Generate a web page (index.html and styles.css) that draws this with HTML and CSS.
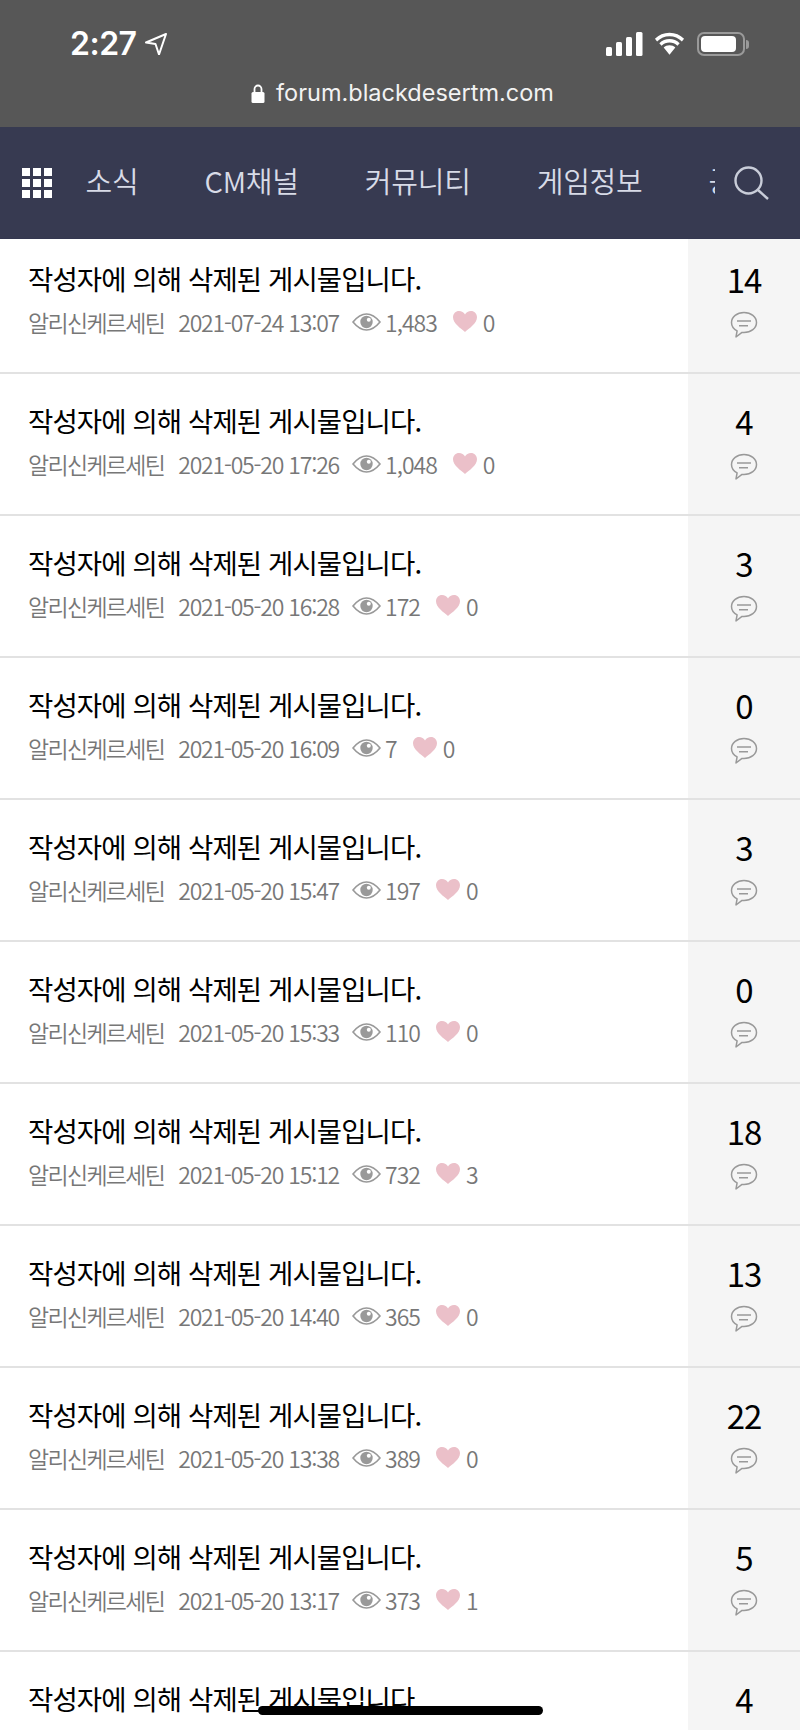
FILE: index.html
```html
<!DOCTYPE html>
<html lang="ko">
<head>
<meta charset="utf-8">
<title>forum.blackdesertm.com</title>
<link rel="stylesheet" href="styles.css">
</head>
<body>
<div class="phone">
  <header class="status">
    <div class="status-top">
      <div class="clock"><span>2:27</span>
        <svg class="loc" viewBox="0 0 22 22"><path d="M1 9.500 21 1 14 21.500 10.500 11Z" fill="none" stroke="#fff" stroke-width="2" stroke-linejoin="round"/></svg>
      </div>
      <div class="sys">
        <svg class="sig" viewBox="0 0 37 24"><rect x="0" y="15" width="6" height="9" rx="1.500"/><rect x="10" y="10" width="6" height="14" rx="1.500"/><rect x="20" y="5" width="6" height="19" rx="1.500"/><rect x="30" y="0" width="6.500" height="24" rx="1.500"/></svg>
        <svg class="wifi" viewBox="0 0 32 24"><path d="M16 4c5 0 9 1.800 12.800 5.300l2.200-2.700C27 2.700 22 0.500 16 0.500S5 2.700 1 6.600l2.200 2.700C7 5.800 11 4 16 4Z"/><path d="M16 10.500c3.200 0 5.800 1.100 8.200 3.300l2.300-2.700C23.500 8.400 20 6.900 16 6.900S8.500 8.400 5.500 11.100l2.300 2.700c2.400-2.200 5-3.300 8.200-3.300Z"/><path d="M16 13.300c-2.400 0-4.300.8-6 2.300l6 7.400 6-7.400c-1.700-1.500-3.600-2.300-6-2.300Z"/></svg>
        <div class="batt"><div class="batt-fill"></div></div><div class="batt-tip"></div>
      </div>
    </div>
    <div class="url">
      <svg class="lock" viewBox="0 0 14 19"><path d="M3.500 9V5a3.500 3.500 0 0 1 7 0v4" fill="none" stroke="#fff" stroke-width="1.800"/><rect x="0.500" y="8" width="13" height="11" rx="1.500" fill="#fff"/></svg>
      <span>forum.blackdesertm.com</span>
    </div>
  </header>

  <nav class="nav">
    <div class="grid-ico"><i></i><i></i><i></i><i></i><i></i><i></i><i></i><i></i><i></i></div>
    <div class="nav-items">
      <span class="n1">소식</span><span class="n2">CM채널</span><span class="n3">커뮤니티</span><span class="n4">게임정보</span><span class="n5">공략</span>
    </div>
    <svg class="search" viewBox="0 0 36 36"><circle cx="15.500" cy="15.500" r="13" fill="none" stroke="#c9cdd9" stroke-width="2.400"/><path d="M25 25 35 34" stroke="#c9cdd9" stroke-width="2.400" fill="none"/></svg>
  </nav>

  <main class="list" id="list"></main>
  <div class="home-bar"></div>
</div>
<script src="list.js"></script>
</body>
</html>
```

FILE: list.js
```js
var rows = [
  ["2021-07-24 13:07", "1,483", "0", "14"],
  ["2021-05-20 17:26", "1,048", "0", "4"],
  ["2021-05-20 16:28", "172", "0", "3"],
  ["2021-05-20 16:09", "7", "0", "0"],
  ["2021-05-20 15:47", "197", "0", "3"],
  ["2021-05-20 15:33", "110", "0", "0"],
  ["2021-05-20 15:12", "732", "3", "18"],
  ["2021-05-20 14:40", "365", "0", "13"],
  ["2021-05-20 13:38", "389", "0", "22"],
  ["2021-05-20 13:17", "373", "1", "5"],
  ["", "", "", "4"]
];
var eye = '<svg class="eye" viewBox="0 0 29 18"><path d="M1 9C5.500 3.500 9.500 1 14.500 1S23.500 3.500 28 9C23.500 14.500 19.500 17 14.500 17S5.500 14.500 1 9Z" fill="none" stroke="#999" stroke-width="1.600"/><circle cx="14.500" cy="9" r="6.200" fill="#999"/><circle cx="16.800" cy="6.800" r="2" fill="#fff"/></svg>';
var heart = '<svg class="heart" viewBox="0 0 24 21"><path d="M12 21C8 17.300 0 12.500 0 6.200 0 2.600 2.700 0 6 0 8.600 0 10.900 1.400 12 3.500 13.100 1.400 15.400 0 18 0 21.300 0 24 2.600 24 6.200 24 12.500 16 17.300 12 21Z" fill="#ebc0c9"/></svg>';
var bubble = '<svg class="bubble" viewBox="0 0 28 28"><path d="M14 1.500C7 1.500 1.500 5.800 1.500 11.500c0 3.600 2.200 6.600 5.600 8.400L6 26l6-4.600c.7.1 1.300.1 2 .1 7 0 12.500-4.300 12.500-10S21 1.500 14 1.500Z" fill="none" stroke="#999" stroke-width="1.500" stroke-linejoin="round"/><path d="M7 10h14M9 14.700h9" stroke="#999" stroke-width="1.500"/></svg>';
document.getElementById("list").innerHTML = rows.map(function (r) {
  var meta = r[0] ? '<div class="meta"><span class="author">알리신케르세틴</span><span class="date">' + r[0] + '</span>' + eye + '<span class="views">' + r[1] + '</span>' + heart + '<span class="likes">' + r[2] + '</span></div>' : '';
  return '<article class="row"><div class="body"><div class="title">작성자에 의해 삭제된 게시물입니다.</div>' + meta + '</div><div class="side"><div class="count">' + r[3] + '</div>' + bubble + '</div></article>';
}).join("");
```

FILE: styles.css
```css
* { box-sizing: border-box; }
html, body { margin: 0; padding: 0; }
body { width: 800px; height: 1730px; overflow: hidden; background: #fff; font-family: "Noto Sans CJK KR", "Noto Sans", sans-serif; }
.phone { position: relative; width: 800px; height: 1730px; overflow: hidden; }

.status { height: 127px; background: #575757; color: #fff; padding-top: 28px; }
.status-top { display: flex; justify-content: space-between; align-items: center; height: 32px; padding: 0 51px 0 70px; }
.clock { display: flex; align-items: center; gap: 8px; font: 600 32px/32px Inter, sans-serif; letter-spacing: -0.5px; }
.loc { width: 22px; height: 22px; }
.sys { display: flex; align-items: center; }
.sig { width: 37px; height: 24px; fill: #fff; }
.wifi { width: 31px; height: 24px; fill: #fff; margin-left: 11px; }
.batt { width: 48px; height: 24px; margin-left: 12px; border: 2px solid #9a9a9a; border-radius: 7px; padding: 2px; }
.batt-fill { width: 35px; height: 16px; background: #fff; border-radius: 4px; }
.batt-tip { width: 3px; height: 9px; background: #9a9a9a; border-radius: 0 3px 3px 0; margin-left: 1px; }
.url { display: flex; justify-content: center; align-items: center; gap: 11px; margin-top: 17px; padding-left: 5px; height: 32px; font: 400 23.5px/32px Inter, sans-serif; color: #f2f2f2; }
.lock { width: 14px; height: 19px; }

.nav { display: flex; align-items: center; height: 112px; background: #373a51; padding-left: 22px; position: relative; border-bottom: 1px solid #343750; }
.grid-ico { display: grid; grid-template-columns: repeat(3, 8px); grid-auto-rows: 8px; gap: 3px; width: 30px; }
.grid-ico i { background: #fff; display: block; }
.nav-items { margin-left: 33.500px; margin-top: -6px; width: 629px; height: 40px; overflow: hidden; display: flex; gap: 66px; white-space: nowrap; font-size: 29px; line-height: 40px; letter-spacing: -0.200px; color: #d8dbe7; font-weight: 350; }
.search { position: absolute; left: 733px; top: 38px; width: 36px; height: 36px; }

.list { margin-top: -7px; }
.row { display: flex; height: 142px; border-bottom: 2px solid #e2e2e2; }
.body { flex: 1; padding: 26px 0 0 28px; }
.title { font-size: 27.500px; line-height: 40px; letter-spacing: -0.900px; color: #000; font-weight: 400; white-space: nowrap; }
.meta { display: flex; align-items: center; margin-top: 6px; height: 36px; font-size: 23px; letter-spacing: -1px; color: #777; font-weight: 350; white-space: nowrap; }
.author { letter-spacing: -1.700px; }
.date { margin-left: 14px; letter-spacing: -1.200px; }
.eye { width: 29px; height: 18px; margin-left: 13px; }
.views { margin-left: 4px; }
.heart { width: 24px; height: 21px; margin-left: 16px; margin-top: -2px; }
.likes { margin-left: 6px; }
.side { width: 112px; background: #f5f5f5; display: flex; flex-direction: column; align-items: center; padding-top: 25px; }
.count { font-size: 33px; line-height: 44px; color: #000; font-weight: 400; letter-spacing: -1px; }
.bubble { width: 28px; height: 28px; margin-top: 10px; }

.home-bar { position: absolute; left: 258px; top: 1706px; width: 285px; height: 9px; border-radius: 5px; background: #000; }
```
